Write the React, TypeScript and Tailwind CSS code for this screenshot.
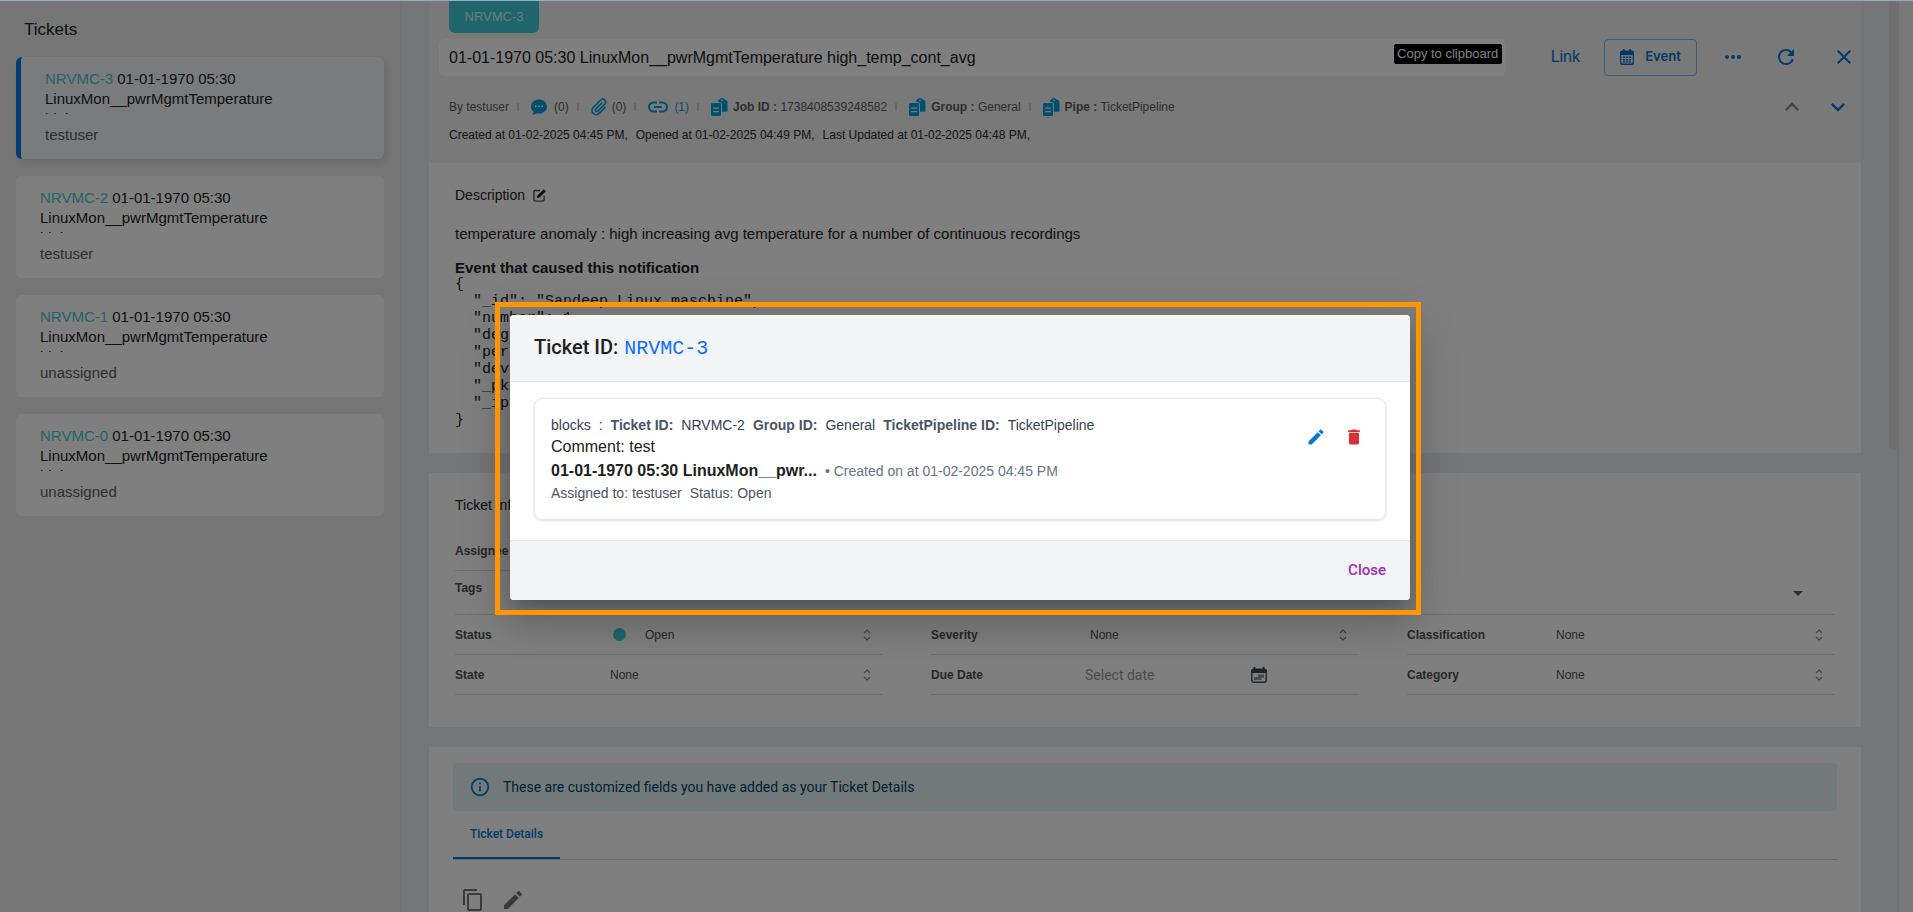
import type { ReactNode } from "react";
import {
  MdArrowDropDown,
  MdClose,
  MdDelete,
  MdEdit,
  MdExpandLess,
  MdExpandMore,
  MdInfoOutline,
  MdMoreHoriz,
  MdOutlineContentCopy,
  MdRefresh,
} from "react-icons/md";

const tickets = [
  { id: "NRVMC-3", assignee: "testuser", active: true },
  { id: "NRVMC-2", assignee: "testuser", active: false },
  { id: "NRVMC-1", assignee: "unassigned", active: false },
  { id: "NRVMC-0", assignee: "unassigned", active: false },
];

const eventLines = [
  "{",
  '  "_id": "Sandeep Linux maschine",',
  '  "number": 1,',
  '  "deg',
  '  "per',
  '  "dev',
  '  "_pk',
  '  "_ip',
  "}",
];

function ChatIcon() {
  return (
    <svg width="16" height="16" viewBox="0 0 16 16" fill="#00a0e0" aria-hidden="true">
      <path d="M8 .5C3.6.5 0 3.600 0 7.500c0 2.100 1 3.900 2.600 5.200L1.600 16l4.100-1.700c.7.2 1.500.3 2.300.3 4.400 0 8-3.200 8-7.100S12.400.5 8 .5z" />
      <g fill="#f1f1f1">
        <circle cx="4.800" cy="7.300" r="1" />
        <circle cx="8" cy="7.300" r="1" />
        <circle cx="11.200" cy="7.300" r="1" />
      </g>
    </svg>
  );
}

function ClipIcon() {
  return (
    <svg width="18" height="18" viewBox="0 0 18 18" fill="none" stroke="#00a0e0" strokeWidth="1.600" strokeLinecap="round" aria-hidden="true">
      <path d="M11.500 5.200 5.800 11a1.500 1.500 0 0 0 2.100 2.100l6.900-7A2.900 2.900 0 0 0 10.700 2L3.200 9.500a4.200 4.200 0 0 0 0 5.900 4.200 4.200 0 0 0 5.900 0l6-6" />
    </svg>
  );
}

function ChainIcon() {
  return (
    <svg width="20" height="12" viewBox="0 0 20 12" fill="none" stroke="#00a0e0" strokeWidth="2" aria-hidden="true">
      <path d="M9 1.500H5.500a4.500 4.500 0 0 0 0 9H9M11 1.500h3.500a4.500 4.500 0 0 1 0 9H11M6 6h8" />
    </svg>
  );
}

function DocsIcon() {
  return (
    <svg width="17" height="18" viewBox="0 0 17 18" aria-hidden="true">
      <path fill="#00a0e0" d="M7 2.500 9 1a2.500 2.500 0 0 1 4 0l1 .8c1.500 0 2.500 1 2.500 2.500v8.200c0 .8-.5 1.300-1.300 1.300H11V6.500C11 5 10 4 8.500 4H7z" />
      <circle cx="11" cy="2.300" r=".9" fill="#f1f1f1" />
      <rect x="0" y="5" width="10" height="13" rx="1.200" fill="#00a0e0" />
      <path stroke="#f1f1f1" strokeWidth="1.300" d="M2 10.200h6M2 13.700h6" />
    </svg>
  );
}

function EventIcon() {
  return (
    <svg width="14" height="16" viewBox="0 0 14 16" aria-hidden="true">
      <path fill="#0072cc" d="M2 1.500h1V0h1.500v1.500h5V0H11v1.500h1a2 2 0 0 1 2 2V14a2 2 0 0 1-2 2H2a2 2 0 0 1-2-2V3.500a2 2 0 0 1 2-2z" />
      <path fill="#e4ebf1" d="M1.300 6h11.400v7.600a1 1 0 0 1-1 1H2.300a1 1 0 0 1-1-1z" />
      <path stroke="#0072cc" strokeWidth="1.500" strokeDasharray="2 1" d="M3 8.300h8M3 10.700h8M3 13h8" />
    </svg>
  );
}

function EditNoteIcon() {
  return (
    <svg width="13" height="13" viewBox="0 0 13 13" fill="none" aria-hidden="true">
      <path stroke="#555555" strokeWidth="1.400" d="M7 1.500H2.200c-.8 0-1.300.5-1.300 1.300v8c0 .8.5 1.300 1.300 1.300h7.600c.8 0 1.300-.5 1.300-1.300V6.500" />
      <path fill="#1a1a1a" d="m4 9 .5-2.500L10.800.2l2 2L6.500 8.500z" />
    </svg>
  );
}

function CalendarIcon() {
  return (
    <svg width="16" height="16" viewBox="0 0 16 16" aria-hidden="true">
      <rect x=".8" y="2.300" width="14.400" height="12.900" rx="2" fill="none" stroke="#475060" strokeWidth="1.500" />
      <path fill="#3b4452" d="M2.500 0h2v2h7V0h2v2a2 2 0 0 1 2 2v2H.5V4a2 2 0 0 1 2-2z" />
      <path fill="#94979f" d="M7 7.500h6v3.200h-2.500V13H3v-3h4z" />
    </svg>
  );
}

function SortIcon() {
  return (
    <svg className="pointer-events-none" width="8" height="12" viewBox="0 0 8 12" fill="none" stroke="#85858c" strokeWidth="1.200" aria-hidden="true">
      <path d="M1 4l3-3 3 3M1 8l3 3 3-3" />
    </svg>
  );
}

function Sep() {
  return <span className="mx-2 h-2 w-0.5 bg-[#d0d0d3]" />;
}

function Select({ label, value, name, first, dot }: { label: string; value: string; name: string; first?: string; dot?: boolean }) {
  return (
    <div className="flex h-10 items-center border-b border-[#dcdcde] pr-3">
      <label htmlFor={name} className={`${first ?? "w-[155px]"} shrink-0 text-xs font-bold text-[#505050]`}>
        {label}
      </label>
      {dot && <span className="mr-[19px] ml-[3px] size-[13px] rounded-full bg-[#3ad0da]" />}
      <select id={name} defaultValue={value} className="min-w-0 flex-1 appearance-none bg-transparent text-xs text-[#505050]">
        <option>{value}</option>
      </select>
      <SortIcon />
    </div>
  );
}

function Meta({ label, children }: { label: string; children: ReactNode }) {
  return (
    <>
      <DocsIcon />
      <span className="ml-[5px]">
        <b>{label} :</b> {children}
      </span>
    </>
  );
}

function Sidebar() {
  return (
    <aside className="w-[401px] shrink-0 border-r border-[#e3e4e8] bg-[#ebebeb] px-4 pt-5">
      <h2 className="mb-[17px] ml-2 text-[17px] leading-5 text-[#212121]">Tickets</h2>
      <ul className="flex flex-col gap-[17px]">
        {tickets.map((t) => (
          <li key={t.id}>
            <a
              href={`#${t.id}`}
              className={
                t.active
                  ? "block h-[102px] rounded-md border-l-[5px] border-[#0078e0] bg-[#f5f6fb] pt-3 pr-6 pl-6 shadow-[3px_4px_10px_rgba(0,0,0,0.09)]"
                  : "block h-[102px] rounded-md bg-white px-6 pt-3"
              }
            >
              <p className="h-[45px] w-[250px] overflow-hidden text-[15px] leading-5 text-[#212121]">
                <span className="text-[#45c8d0]">{t.id}</span> 01-01-1970 05:30 LinuxMon__pwrMgmtTemperature high_temp_cont_avg
              </p>
              <p className="mt-[11px] text-[15px] leading-5 text-[#5c5c5c]">{t.assignee}</p>
            </a>
          </li>
        ))}
      </ul>
    </aside>
  );
}

function Header() {
  return (
    <header className="h-[163px] bg-[#f2f2f2] pr-[5px]">
      <div className="ml-5 flex h-[33px] w-[90px] items-center justify-center rounded-b-md bg-[#3ccdd6] pt-px text-[13px] text-[#d8f6f8]">
        NRVMC-3
      </div>
      <div className="mt-1.5 ml-2.5 flex h-[37px] items-center">
        <div className="relative mr-[45px] h-[37px] min-w-0 flex-1">
          <input
            aria-label="Ticket title"
            defaultValue="01-01-1970 05:30 LinuxMon__pwrMgmtTemperature high_temp_cont_avg"
            className="h-full w-full rounded-md bg-white px-2.5 text-base text-[#212121]"
          />
          <span className="absolute top-[5px] right-1 flex h-5 w-[108px] items-center justify-center rounded-xs bg-black text-[13px] text-white">
            Copy to clipboard
          </span>
        </div>
        <a href="#link" className="mr-6 pb-0.5 text-base text-[#0072dd]">
          Link
        </a>
        <button className="mr-[15px] flex h-[37px] w-[93px] items-center justify-center gap-[11px] rounded border border-[#7fb3e0] pb-px font-[Inter,sans-serif] text-[13px] font-semibold text-[#0072cc]">
          <EventIcon />
          Event
        </button>
        <div className="flex items-center pb-px text-[24px] text-[#0078e0]">
          <button aria-label="More" className="mr-[29px] ml-[9px]">
            <MdMoreHoriz />
          </button>
          <button aria-label="Refresh" className="mr-[34px]">
            <MdRefresh />
          </button>
          <button aria-label="Close ticket">
            <MdClose />
          </button>
        </div>
      </div>
      <div className="mt-[17px] flex h-7 items-center pl-5 text-xs text-[#5c5c5c]">
        <span>By testuser</span>
        <Sep />
        <span className="mr-[7px] ml-1">
          <ChatIcon />
        </span>
        <span>(0)</span>
        <Sep />
        <span className="mr-1 ml-[3px]">
          <ClipIcon />
        </span>
        <span>(0)</span>
        <Sep />
        <span className="mr-1.5 ml-1">
          <ChainIcon />
        </span>
        <span className="text-[#0aa0dc]">(1)</span>
        <Sep />
        <span className="w-1" />
        <Meta label="Job ID">1738408539248582</Meta>
        <Sep />
        <span className="w-1" />
        <Meta label="Group">General</Meta>
        <Sep />
        <span className="w-1" />
        <Meta label="Pipe">TicketPipeline</Meta>
        <span className="ml-auto flex gap-[18px] pr-1 text-[28px]">
          <button aria-label="Previous ticket" className="text-[#8a8a8a]">
            <MdExpandLess />
          </button>
          <button aria-label="Next ticket" className="text-[#0078e0]">
            <MdExpandMore />
          </button>
        </span>
      </div>
      <p className="mt-1.5 flex gap-2 pl-5 text-xs leading-4 text-[#2a2a2a]">
        <span>Created at 01-02-2025 04:45 PM,</span>
        <span>Opened at 01-02-2025 04:49 PM,</span>
        <span>Last Updated at 01-02-2025 04:48 PM,</span>
      </p>
    </header>
  );
}

function Description() {
  return (
    <section className="h-[290px] bg-white px-[26px] pt-[22px] text-[#212121]">
      <h3 className="flex items-center gap-2 text-sm leading-5">
        Description
        <button aria-label="Edit description">
          <EditNoteIcon />
        </button>
      </h3>
      <p className="mt-[19px] text-[15px] leading-5">
        temperature anomaly : high increasing avg temperature for a number of continuous recordings
      </p>
      <p className="mt-[15px] text-[15px] leading-[17px] font-bold">Event that caused this notification</p>
      <pre className="font-['Liberation_Mono',monospace] text-[15px] leading-[17px]">{eventLines.join("\n")}</pre>
    </section>
  );
}

function TicketInfo() {
  return (
    <section className="mt-5 h-[254px] bg-white px-[26px] pt-[22px]">
      <h3 className="text-sm leading-5 text-[#212121]">Ticket Info</h3>
      <div className="mt-4 flex h-10 w-[428px] items-center border-b border-[#dcdcde] text-xs font-bold text-[#505050]">
        Assignee
      </div>
      <div className="flex h-11 items-center justify-between border-b border-[#dcdcde] pr-[25px] text-xs font-bold text-[#505050]">
        <span className="pb-2.5">Tags</span>
        <button aria-label="Open tags" className="text-[24px] text-[#606060]">
          <MdArrowDropDown />
        </button>
      </div>
      <div className="grid grid-cols-3 gap-x-12">
        <Select label="Status" name="status" value="Open" dot />
        <Select label="Severity" name="severity" value="None" first="w-[159px]" />
        <Select label="Classification" name="classification" value="None" first="w-[149px]" />
        <Select label="State" name="state" value="None" />
        <div className="flex h-10 items-center border-b border-[#dcdcde]">
          <label htmlFor="due" className="w-[154px] shrink-0 text-xs font-bold text-[#505050]">
            Due Date
          </label>
          <input id="due" placeholder="Select date" className="w-[166px] font-[Roboto,sans-serif] text-sm placeholder:text-[#98989c]" />
          <button aria-label="Pick due date">
            <CalendarIcon />
          </button>
        </div>
        <Select label="Category" name="category" value="None" first="w-[149px]" />
      </div>
    </section>
  );
}

function CustomFields() {
  return (
    <section className="mt-5 flex-1 bg-white pt-4 pr-6 pl-6 font-[Roboto,sans-serif]">
      <div className="flex h-12 items-center gap-3 rounded bg-[#e5f3f7] px-4 text-sm text-[#014361]">
        <MdInfoOutline className="text-[22px] text-[#0288d1]" />
        These are customized fields you have added as your Ticket Details
      </div>
      <div className="h-[49px] border-b border-[#d8d8da]">
        <button className="h-12 w-[107px] border-b-2 border-[#0078d4] text-xs font-medium text-[#0078d4]">Ticket Details</button>
      </div>
      <div className="mt-7 ml-2 flex gap-4 text-[24px] text-[#757575]">
        <button aria-label="Copy fields">
          <MdOutlineContentCopy />
        </button>
        <button aria-label="Edit fields">
          <MdEdit />
        </button>
      </div>
    </section>
  );
}

function TicketDialog() {
  return (
    <div className="relative w-[900px]">
      <div
        role="dialog"
        aria-labelledby="dialog-title"
        className="rounded bg-white shadow-[0px_11px_15px_-7px_rgba(0,0,0,0.2),0px_24px_38px_3px_rgba(0,0,0,0.14),0px_9px_46px_8px_rgba(0,0,0,0.12)]"
      >
        <h2
          id="dialog-title"
          className="flex h-[67px] items-baseline gap-1.5 rounded-t border-b border-gray-200 bg-gray-100 px-6 pt-[18px] font-[Roboto,sans-serif] text-xl font-medium text-[#212121]"
        >
          Ticket ID:
          <span className="font-['Liberation_Mono',monospace] font-normal text-[#0d6efd]">NRVMC-3</span>
        </h2>
        <div className="px-6 pt-4 pb-5">
          <div className="flex justify-between rounded-lg border border-gray-200 p-4 shadow-sm">
            <div className="text-base text-[#212121]">
              <p className="flex gap-2 text-sm text-gray-700">
                <span>blocks</span>
                <span>:</span>
                <b className="text-gray-600">Ticket ID:</b>
                <span>NRVMC-2</span>
                <b className="text-gray-600">Group ID:</b>
                <span>General</span>
                <b className="text-gray-600">TicketPipeline ID:</b>
                <span>TicketPipeline</span>
              </p>
              <p>Comment: test</p>
              <p className="flex items-baseline gap-2">
                <b>01-01-1970 05:30 LinuxMon__pwr...</b>
                <span className="text-sm text-gray-500">• Created on at 01-02-2025 04:45 PM</span>
              </p>
              <p className="flex gap-2 text-sm text-gray-600">
                <span>Assigned to: testuser</span>
                <span>Status: Open</span>
              </p>
            </div>
            <div className="flex items-start gap-[18px] pt-3 pr-[5px] text-[20px]">
              <button aria-label="Edit link" className="text-[#0078d7]">
                <MdEdit />
              </button>
              <button aria-label="Delete link" className="text-[#dc2f35]">
                <MdDelete />
              </button>
            </div>
          </div>
        </div>
        <div className="flex h-[60px] items-center justify-end rounded-b border-t border-gray-200 bg-gray-100 px-6">
          <button className="font-[Roboto,sans-serif] text-[15px] font-medium text-[#a22bb5]">Close</button>
        </div>
      </div>
      <div className="pointer-events-none absolute -top-[13px] -right-[11px] -bottom-[15px] -left-[15px] border-5 border-[#ff9500]" />
    </div>
  );
}

export default function App() {
  return (
    <div className="relative h-screen overflow-hidden font-['Liberation_Sans',Arial,sans-serif]">
      <div className="flex h-full bg-[#e9ebef]">
        <Sidebar />
        <main className="ml-7 flex min-w-0 flex-1 flex-col">
          <Header />
          <Description />
          <TicketInfo />
          <CustomFields />
        </main>
        <div className="ml-7 w-2.5 border-r border-[#dddddf]">
          <div className="h-[450px] rounded-full bg-[#dfdfdf]" />
        </div>
        <div className="w-3.5 bg-[#f1f1f1]" />
      </div>
      <div className="absolute inset-0 flex items-center justify-center border-t border-[#9aabca] bg-black/50 pt-0.5 pl-[7px]">
        <TicketDialog />
      </div>
    </div>
  );
}
